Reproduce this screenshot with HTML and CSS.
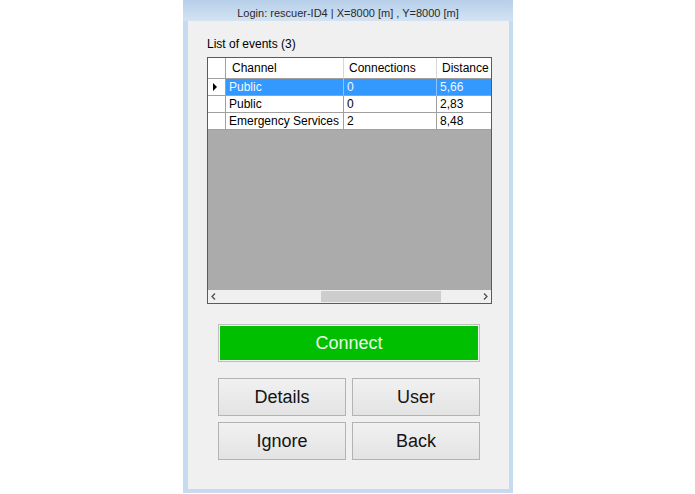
FILE: index.html
```html
<!DOCTYPE html>
<html>
<head>
<meta charset="utf-8">
<link rel="stylesheet" href="styles.css">
</head>
<body>
<div class="window">
  <div class="titlebar">Login: rescuer-ID4 | X=8000 [m] , Y=8000 [m]</div>
  <div class="frame">
    <div class="client">
      <div class="label">List of events (3)</div>
      <div class="grid">
        <div class="row head">
          <div class="c rh"></div>
          <div class="c c1">Channel</div>
          <div class="c c2">Connections</div>
          <div class="c c3">Distance</div>
        </div>
        <div class="row sel">
          <div class="c rh"><svg width="5" height="8" viewBox="0 0 5 8"><polygon points="0,0 4,4 0,8" fill="#000"/></svg></div>
          <div class="c c1">Public</div>
          <div class="c c2">0</div>
          <div class="c c3">5,66</div>
        </div>
        <div class="row">
          <div class="c rh"></div>
          <div class="c c1">Public</div>
          <div class="c c2">0</div>
          <div class="c c3">2,83</div>
        </div>
        <div class="row">
          <div class="c rh"></div>
          <div class="c c1">Emergency Services</div>
          <div class="c c2">2</div>
          <div class="c c3">8,48</div>
        </div>
        <div class="workspace"></div>
        <div class="hscroll">
          <svg class="arr" width="5" height="7" viewBox="0 0 5 7"><polyline points="4,0.5 1,3.5 4,6.5" fill="none" stroke="#505050" stroke-width="1.3"/></svg>
          <div class="track"><div class="thumb"></div></div>
          <svg class="arr" width="5" height="7" viewBox="0 0 5 7"><polyline points="1,0.5 4,3.5 1,6.5" fill="none" stroke="#505050" stroke-width="1.3"/></svg>
        </div>
      </div>
      <div class="buttons">
        <div class="btn connect"><span>Connect</span></div>
        <div class="pair">
          <div class="btn">Details</div>
          <div class="btn">User</div>
          <div class="btn">Ignore</div>
          <div class="btn">Back</div>
        </div>
      </div>
    </div>
  </div>
</div>
</body>
</html>
```

FILE: styles.css
```css
html, body {
  margin: 0;
  padding: 0;
  background: #ffffff;
}
body {
  font-family: "Liberation Sans", Arial, sans-serif;
}
.window {
  margin-left: 183px;
  width: 330px;
  height: 493px;
  display: flex;
  flex-direction: column;
}
.titlebar {
  box-sizing: border-box;
  height: 21px;
  padding-top: 7px;
  line-height: 13px;
  font-size: 11px;
  color: #2a2a2a;
  text-align: center;
  background: linear-gradient(#b7cfe9, #d3e3f3);
}
.frame {
  flex: 1;
  display: flex;
  border-left: 5px solid #c5dbf0;
  border-right: 4px solid #c5dbf0;
  border-bottom: 4px solid #c5dbf0;
}
.client {
  flex: 1;
  background: #f0f0f0;
  padding-left: 19px;
  display: flex;
  flex-direction: column;
}
.label {
  margin-top: 16px;
  font-size: 12px;
  line-height: 14px;
  color: #000;
}
.grid {
  margin-top: 6px;
  box-sizing: border-box;
  width: 285px;
  height: 247px;
  border: 1px solid #5a5a5a;
  display: flex;
  flex-direction: column;
  overflow: hidden;
  font-size: 12px;
  color: #000;
}
.row {
  display: flex;
  height: 17px;
  flex: none;
  background: #fff;
}
.row.head {
  height: 21px;
}
.c {
  box-sizing: border-box;
  flex: none;
  overflow: hidden;
  white-space: nowrap;
  border-right: 1px solid #a0a0a0;
  border-bottom: 1px solid #a0a0a0;
  padding-left: 3px;
  line-height: 16px;
}
.rh {
  width: 18px;
  padding-left: 0;
  display: flex;
  align-items: center;
  justify-content: center;
}
.rh svg { margin-left: -3px; }
.c1 { width: 118px; }
.c2 { width: 93px; }
.c3 { width: 80px; border-right: none; }
.head .c {
  line-height: 20px;
  padding-left: 6px;
  border-right-color: #d8d8d8;
  border-bottom-color: #a0a0a0;
}
.head .c2, .head .c3 { padding-left: 5px; }
.head .rh { border-right-color: #a0a0a0; padding-left: 0; }
.sel .c1, .sel .c2, .sel .c3 {
  background: #3399ff;
  color: #f2f8ff;
  border-right-color: #8cc4ff;
}
.workspace {
  flex: 1;
  background: #ababab;
}
.hscroll {
  height: 13px;
  flex: none;
  background: #f0f0f0;
  display: flex;
  align-items: center;
  padding: 0 3px;
  gap: 3px;
}
.track {
  flex: 1;
  height: 11px;
  display: flex;
  padding-left: 102px;
}
.thumb {
  width: 120px;
  height: 11px;
  background: #cdcdcd;
}
.buttons {
  margin-left: 11px;
  width: 262px;
  display: flex;
  flex-direction: column;
}
.btn {
  box-sizing: border-box;
  height: 38px;
  border: 1px solid #b3b3b3;
  background: linear-gradient(#f1f1f1, #e3e3e3);
  display: flex;
  align-items: center;
  justify-content: center;
  font-size: 18px;
  color: #141414;
}
.btn.connect {
  margin-top: 20px;
  border: 1px solid #bdbdbd;
  padding: 1px;
  background: #f2f2f2;
}
.btn.connect span {
  flex: 1;
  align-self: stretch;
  background: #00bf00;
  color: #eaf8ea;
  display: flex;
  align-items: center;
  justify-content: center;
}
.pair {
  margin-top: 16px;
  display: grid;
  grid-template-columns: 128px 128px;
  column-gap: 6px;
  row-gap: 6px;
}
```
